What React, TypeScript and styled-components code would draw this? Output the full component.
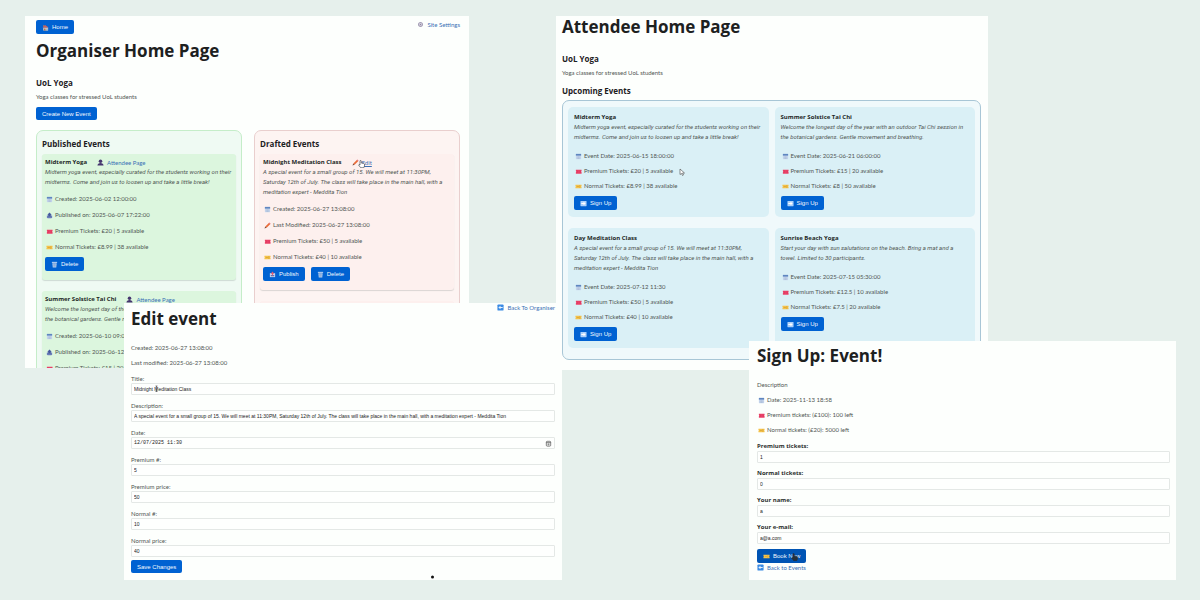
import React, { useId } from "react";
import styled, { createGlobalStyle } from "styled-components";

const heading = `"Open Sans", "Noto Sans", sans-serif`;
const body = `Lato, "Open Sans", sans-serif`;
const control = `"Liberation Sans", Arial, sans-serif`;

const GlobalStyle = createGlobalStyle`
  *, *::before, *::after { box-sizing: border-box; }
  body { margin: 0; background: #e6f0ec; }
  h1, h2, h3, p, ul { margin: 0; padding: 0; }
  ul { list-style: none; }
`;

const Board = styled.main`
  position: relative;
  min-height: 100vh;
  overflow: hidden;
  background: #e6f0ec;
  color: #505653;
  font: 6px/10px ${body};
`;

/* Each page is a window lying freely on the board. */
const Page = styled.section<{ $x: number; $y: number; $w: number }>`
  position: absolute;
  left: ${(p) => p.$x}px;
  top: ${(p) => p.$y}px;
  width: ${(p) => p.$w}%;
  background: #fdfffd;
`;
const OrganiserPage = styled(Page)`
  height: 352px;
  overflow: hidden;
  padding: 4px 9px 0 11px;
`;
const AttendeePage = styled(Page)`
  padding: 1px 7px 10px 6px;
`;
const EditPage = styled(Page)`
  padding: 0 7px 7px;
`;
const SignUpPage = styled(Page)`
  padding: 5px 6px 6px 8px;
`;

const TopBar = styled.div`
  display: flex;
  justify-content: space-between;
  align-items: flex-start;
`;
const Title = styled.h1<{ $top?: number }>`
  margin-top: ${(p) => p.$top ?? 0}px;
  font: 700 17px/20px ${heading};
  color: #1d211f;
  white-space: nowrap;
`;
const Subtitle = styled.h2<{ $top?: number }>`
  margin-top: ${(p) => p.$top ?? 0}px;
  font: 700 8px/12px ${heading};
  color: #1d211f;
`;
const Lead = styled.p`
  margin: 3px 0 5px;
`;

const Button = styled.button<{ $active?: boolean; $small?: boolean }>`
  display: inline-flex;
  align-items: center;
  gap: 3px;
  height: ${(p) => (p.$small ? 13 : 14)}px;
  padding: 0 6px;
  border: 0;
  border-radius: 2px;
  background: ${(p) => (p.$active ? "#0054b4" : "#0062d2")};
  color: #f4f9ff;
  font: 6px/10px ${control};
  white-space: nowrap;
  cursor: pointer;
`;
const Link = styled.a<{ $hover?: boolean }>`
  display: inline-flex;
  align-items: center;
  gap: 3px;
  color: #3a70b5;
  font: 6px/9px ${body};
  white-space: nowrap;
  text-decoration: ${(p) => (p.$hover ? "underline" : "none")};
`;

const tones = {
  green: { panel: "#effaf3", edge: "#c5edc9", card: "#dcf6de" },
  red: { panel: "#fdf4f2", edge: "#e9cfce", card: "#fdf0ee" },
  blue: { panel: "#f0f9fb", edge: "#a8c6d6", card: "#daf0f6" },
};
type Tone = keyof typeof tones;

const Columns = styled.div`
  display: grid;
  grid-template-columns: 1fr 1fr;
  align-items: start;
  gap: 12px;
  margin-top: 10px;
`;
const Panel = styled.section<{ $tone: Tone }>`
  padding: 7px 5px;
  min-height: 260px;
  border: 1px solid ${(p) => tones[p.$tone].edge};
  border-radius: 7px;
  background: ${(p) => tones[p.$tone].panel};
`;
const CardList = styled.div`
  display: grid;
  gap: 11px;
  margin-top: 4px;
`;
const CardGrid = styled.div`
  display: grid;
  grid-template-columns: 1fr 1fr;
  gap: 11px 6px;
  margin-top: 3px;
  padding: 6px 5px 11px;
  border: 1px solid ${tones.blue.edge};
  border-radius: 7px;
  background: ${tones.blue.panel};
`;
const Card = styled.article<{ $tone: Tone }>`
  padding: ${(p) => (p.$tone === "blue" ? "6px 6px 7px" : "4px 3px 9px")};
  border-radius: ${(p) => (p.$tone === "blue" ? 5 : 3)}px;
  background: ${(p) => tones[p.$tone].card};
  box-shadow: ${(p) => (p.$tone === "blue" ? "none" : "0 1px 1px rgba(60, 80, 70, 0.18)")};
`;
const CardHead = styled.div`
  display: flex;
  align-items: center;
  gap: 10px;
`;
const CardTitle = styled.h3`
  font: 700 6px/9px ${heading};
  color: #232826;
  white-space: nowrap;
`;
const Blurb = styled.p`
  font: italic 6px/10px Roboto, ${body};
  white-space: pre-line;
`;
const Facts = styled.ul<{ $gap: number }>`
  display: grid;
  gap: ${(p) => p.$gap}px;
`;
const Fact = styled.li`
  display: flex;
  align-items: center;
  gap: 2px;
  padding-left: 1px;
  line-height: 10px;
  white-space: nowrap;
`;
const CardFacts = styled.div<{ $top: number }>`
  margin: ${(p) => p.$top}px 0 5px;
`;
const Actions = styled.div`
  display: flex;
  gap: 6px;
`;

const Meta = styled.div`
  display: grid;
  gap: 5px;
  margin: 14px 0 6px;
`;
const Form = styled.form<{ $gap: number }>`
  display: grid;
  justify-items: start;
  gap: ${(p) => p.$gap}px;
`;
const FieldGroup = styled.div<{ $gap: number }>`
  display: grid;
  gap: ${(p) => p.$gap}px;
  width: 100%;
`;
const Label = styled.label<{ $strong?: boolean }>`
  display: block;
  font: ${(p) => (p.$strong ? `700 6px/10px ${heading}` : `6px/9px ${body}`)};
  color: ${(p) => (p.$strong ? "#2b302e" : "#505653")};
`;
const InputWrap = styled.div`
  display: flex;
  align-items: center;
  height: 12px;
  padding: 0 2px;
  border: 1px solid #e4e8e6;
  border-radius: 1px;
  background: #fefffe;
`;
const Input = styled.input<{ $mono?: boolean }>`
  flex: 1;
  min-width: 0;
  height: 10px;
  padding: 0;
  border: 0;
  outline: 0;
  background: transparent;
  color: #222;
  font: 5px/10px ${(p) => (p.$mono ? `"Liberation Mono", monospace` : control)};
`;
const Glyph = styled.svg`
  flex: none;
  width: 7px;
  height: 7px;
`;
const Cursor = styled.svg<{ $x: number; $y: number }>`
  position: absolute;
  left: ${(p) => p.$x}px;
  top: ${(p) => p.$y}px;
  width: 7px;
  height: 8px;
  pointer-events: none;
`;

const art = {
  calendar: (
    <>
      <rect x="2" y="2" width="12" height="12" rx="1" fill="#c9d9ef" />
      <path d="M2 2h12v4H2z" fill="#5f86c0" />
      <path d="M4 9h8M4 12h8" stroke="#8d9fc2" strokeWidth="1.4" strokeDasharray="2 1" />
    </>
  ),
  premium: (
    <>
      <path d="M2 4h13v3a1 1 0 0 0 0 2v4H2V9a1 1 0 0 0 0-2z" fill="#ea4168" />
      <path d="M5 6v5M12 6v5" stroke="#d22f58" strokeWidth="1" />
    </>
  ),
  normal: (
    <>
      <path d="M1 4h14v3a1 1 0 0 0 0 2v3H1V9a1 1 0 0 0 0-2z" fill="#f5c24a" />
      <path d="M4 8h5M11 5v6" stroke="#c7962f" strokeWidth="1.2" />
    </>
  ),
  outbox: (
    <>
      <path d="M2 8h3l1 2h4l1-2h3v5l-2 1H4l-2-1z" fill="#6a7cba" />
      <path d="M8 1l5 5h-2v5H5V6H3z" fill="#43579f" />
    </>
  ),
  publish: (
    <>
      <path d="M2 5h12v9H2z" fill="#c9d5ee" />
      <path d="M4 9h8v3H4z" fill="#5473b5" />
      <path d="M8 1l4 5h-3v4H7V6H4z" fill="#e2586a" />
    </>
  ),
  bin: (
    <>
      <path d="M2 2h12v2H2z" fill="#dfe9f7" />
      <path d="M3 5h10l-1 10H4z" fill="#b4cdee" />
      <path d="M6 6v7M8 6v7M10 6v7" stroke="#6f95c8" strokeWidth="1" />
    </>
  ),
  pencil: (
    <>
      <path d="M3 10L11 2l3 3-8 8z" fill="#ea6d3a" />
      <path d="M11 2l1-1 3 3-1 1z" fill="#d84a5c" />
      <path d="M3 10l3 3-5 2z" fill="#7a4a3a" />
    </>
  ),
  person: (
    <>
      <circle cx="8" cy="5" r="4" fill="#46366f" />
      <path d="M1 15c0-4 3-6 7-6s7 2 7 6z" fill="#46366f" />
    </>
  ),
  gear: (
    <>
      <circle cx="8" cy="8" r="4.5" fill="#dcd8e4" stroke="#a39cb4" strokeWidth="2.4" />
      <circle cx="8" cy="8" r="1.6" fill="#8d86a0" />
    </>
  ),
  home: (
    <>
      <path d="M3 8h11v7H3z" fill="#e6d6c8" />
      <path d="M1 8l6-6 8 6z" fill="#d0605a" />
      <path d="M3 2h2v4H3z" fill="#b57b5a" />
      <path d="M5 10h3v5H5z" fill="#96623f" />
      <path d="M10 10h3v3h-3z" fill="#5f96cf" />
    </>
  ),
  next: (
    <>
      <rect x="1" y="2" width="14" height="12" rx="1" fill="#a9d0fa" />
      <path d="M3 7h5V4l5 4-5 4V9H3z" fill="#fff" />
    </>
  ),
  back: (
    <>
      <rect x="1" y="1" width="14" height="14" rx="2" fill="#3b8be4" />
      <path d="M13 7H8V4L3 8l5 4V9h5z" fill="#e8f3ff" />
    </>
  ),
  picker: (
    <>
      <rect x="3" y="3" width="10" height="11" rx="2" fill="none" stroke="#444" strokeWidth="1.5" />
      <path d="M3 6h10M6 9h4M6 11h4" stroke="#444" strokeWidth="1.5" />
    </>
  ),
};
type IconName = keyof typeof art;

const Icon = ({ name }: { name: IconName }) => (
  <Glyph viewBox="0 0 16 16" aria-hidden="true">
    {art[name]}
  </Glyph>
);

type FactData = [IconName, string];
const FactList = ({ facts, gap }: { facts: FactData[]; gap: number }) => (
  <Facts $gap={gap}>
    {facts.map(([icon, text]) => (
      <Fact key={text}>
        <Icon name={icon} />
        {text}
      </Fact>
    ))}
  </Facts>
);

type EventProps = {
  tone: Tone;
  title: string;
  blurb: string;
  facts: FactData[];
  link?: React.ReactNode;
  actions: FactData[];
};
const EventCard = ({ tone, title, blurb, facts, link, actions }: EventProps) => (
  <Card $tone={tone}>
    <CardHead>
      <CardTitle>{title}</CardTitle>
      {link}
    </CardHead>
    <Blurb>{blurb}</Blurb>
    <CardFacts $top={tone === "blue" ? 9 : 7}>
      <FactList facts={facts} gap={tone === "blue" ? 5 : 6} />
    </CardFacts>
    <Actions>
      {actions.map(([icon, text]) => (
        <Button key={text} type="button">
          <Icon name={icon} />
          {text}
        </Button>
      ))}
    </Actions>
  </Card>
);

type FieldProps = { label: string; value: string; strong?: boolean; date?: boolean };
const Field = ({ label, value, strong, date }: FieldProps) => {
  const id = useId();
  return (
    <div>
      <Label htmlFor={id} $strong={strong}>
        {label}
      </Label>
      <InputWrap>
        <Input id={id} defaultValue={value} $mono={date} />
        {date && <Icon name="picker" />}
      </InputWrap>
    </div>
  );
};

const midterm =
  "Midterm yoga event, especially curated for the students working on their\nmidterms. Come and join us to loosen up and take a little break!";
const meditation =
  "A special event for a small group of 15. We will meet at 11:30PM,\nSaturday 12th of July. The class will take place in the main hall, with a\nmeditation expert - Meddita Tion";
const solstice =
  "Welcome the longest day of the year with an outdoor Tai Chi session in\nthe botanical gardens. Gentle movement and breathing.";
const beach =
  "Start your day with sun salutations on the beach. Bring a mat and a\ntowel. Limited to 30 participants.";

const attendeeLink = (
  <Link href="#attendee">
    <Icon name="person" />
    Attendee Page
  </Link>
);

const upcoming: { title: string; blurb: string; facts: FactData[] }[] = [
  {
    title: "Midterm Yoga",
    blurb: midterm,
    facts: [
      ["calendar", "Event Date: 2025-06-15 18:00:00"],
      ["premium", "Premium Tickets: £20 | 5 available"],
      ["normal", "Normal Tickets: £8.99 | 38 available"],
    ],
  },
  {
    title: "Summer Solstice Tai Chi",
    blurb: solstice,
    facts: [
      ["calendar", "Event Date: 2025-06-21 06:00:00"],
      ["premium", "Premium Tickets: £15 | 20 available"],
      ["normal", "Normal Tickets: £8 | 50 available"],
    ],
  },
  {
    title: "Day Meditation Class",
    blurb: meditation,
    facts: [
      ["calendar", "Event Date: 2025-07-12 11:30"],
      ["premium", "Premium Tickets: £50 | 5 available"],
      ["normal", "Normal Tickets: £40 | 10 available"],
    ],
  },
  {
    title: "Sunrise Beach Yoga",
    blurb: beach,
    facts: [
      ["calendar", "Event Date: 2025-07-15 05:30:00"],
      ["premium", "Premium Tickets: £12.5 | 10 available"],
      ["normal", "Normal Tickets: £7.5 | 20 available"],
    ],
  },
];

const Hand = ({ x, y, fill }: { x: number; y: number; fill: string }) => (
  <Cursor $x={x} $y={y} viewBox="0 0 14 16" aria-hidden="true">
    <path
      d="M5 1c1 0 1.5.5 1.5 1.5V6l5 1c1 .3 1.5 1 1.5 2v3l-1.5 3.5h-6L1 10l1-1 2 1V2.5C4 1.500 4 1 5 1z"
      fill={fill}
      stroke="#26303a"
      strokeWidth="1.2"
    />
  </Cursor>
);

export default function App() {
  return (
    <Board>
      <GlobalStyle />
      <OrganiserPage $x={25} $y={16} $w={37}>
        <TopBar>
          <Button type="button">
            <Icon name="home" />
            Home
          </Button>
          <Link href="#settings">
            <Icon name="gear" />
            Site Settings
          </Link>
        </TopBar>
        <Title $top={7}>Organiser Home Page</Title>
        <Subtitle $top={16}>UoL Yoga</Subtitle>
        <Lead>Yoga classes for stressed UoL students</Lead>
        <Actions>
          <Button type="button" $small>
            Create New Event
          </Button>
        </Actions>
        <Columns>
          <Panel $tone="green">
            <Subtitle>Published Events</Subtitle>
            <CardList>
              <EventCard
                tone="green"
                title="Midterm Yoga"
                blurb={midterm}
                link={attendeeLink}
                facts={[
                  ["calendar", "Created: 2025-06-02 12:00:00"],
                  ["outbox", "Published on: 2025-06-07 17:22:00"],
                  ["premium", "Premium Tickets: £20 | 5 available"],
                  ["normal", "Normal Tickets: £8.99 | 38 available"],
                ]}
                actions={[["bin", "Delete"]]}
              />
              <EventCard
                tone="green"
                title="Summer Solstice Tai Chi"
                blurb={solstice}
                link={attendeeLink}
                facts={[
                  ["calendar", "Created: 2025-06-10 09:00"],
                  ["outbox", "Published on: 2025-06-12"],
                  ["premium", "Premium Tickets: £15 | 20"],
                ]}
                actions={[]}
              />
            </CardList>
          </Panel>
          <Panel $tone="red">
            <Subtitle>Drafted Events</Subtitle>
            <CardList>
              <EventCard
                tone="red"
                title="Midnight Meditation Class"
                blurb={meditation}
                link={
                  <Link href="#edit" $hover>
                    <Icon name="pencil" />
                    Edit
                  </Link>
                }
                facts={[
                  ["calendar", "Created: 2025-06-27 13:08:00"],
                  ["pencil", "Last Modified: 2025-06-27 13:08:00"],
                  ["premium", "Premium Tickets: £50 | 5 available"],
                  ["normal", "Normal Tickets: £40 | 10 available"],
                ]}
                actions={[
                  ["publish", "Publish"],
                  ["bin", "Delete"],
                ]}
              />
              <Card $tone="red" />
            </CardList>
          </Panel>
        </Columns>
      </OrganiserPage>

      <AttendeePage $x={556} $y={16} $w={36}>
        <Title>Attendee Home Page</Title>
        <Subtitle $top={16}>UoL Yoga</Subtitle>
        <Lead>Yoga classes for stressed UoL students</Lead>
        <Subtitle $top={7}>Upcoming Events</Subtitle>
        <CardGrid>
          {upcoming.map((event) => (
            <EventCard key={event.title} tone="blue" {...event} actions={[["next", "Sign Up"]]} />
          ))}
        </CardGrid>
      </AttendeePage>

      <EditPage $x={124} $y={303} $w={36.5}>
        <TopBar>
          <Title $top={6}>Edit event</Title>
          <Link href="#organiser">
            <Icon name="back" />
            Back To Organiser
          </Link>
        </TopBar>
        <Meta>
          <p>Created: 2025-06-27 13:08:00</p>
          <p>Last modified: 2025-06-27 13:08:00</p>
        </Meta>
        <Form $gap={3}>
          <FieldGroup $gap={6}>
            <Field label="Title:" value="Midnight Meditation Class" />
            <Field
              label="Description:"
              value="A special event for a small group of 15. We will meet at 11:30PM, Saturday 12th of July. The class will take place in the main hall, with a meditation expert - Meddita Tion"
            />
            <Field label="Date:" value="12/07/2025 11:30" date />
            <Field label="Premium #:" value="5" />
            <Field label="Premium price:" value="50" />
            <Field label="Normal #:" value="10" />
            <Field label="Normal price:" value="40" />
          </FieldGroup>
          <Button type="button" $small>
            Save Changes
          </Button>
        </Form>
      </EditPage>

      <SignUpPage $x={749} $y={341} $w={35.6}>
        <Title>Sign Up: Event!</Title>
        <Meta>
          <p>Description</p>
          <FactList
            gap={5}
            facts={[
              ["calendar", "Date: 2025-11-13 18:58"],
              ["premium", "Premium tickets: (£100): 100 left"],
              ["normal", "Normal tickets: (£20): 5000 left"],
            ]}
          />
        </Meta>
        <Form $gap={5}>
          <FieldGroup $gap={5}>
            <Field label="Premium tickets:" value="1" strong />
            <Field label="Normal tickets:" value="0" strong />
            <Field label="Your name:" value="a" strong />
            <Field label="Your e-mail:" value="a@a.com" strong />
          </FieldGroup>
          <Button type="button" $active>
            <Icon name="normal" />
            Book Now
          </Button>
        </Form>
        <Link href="#events">
          <Icon name="back" />
          Back to Events
        </Link>
      </SignUpPage>

      <Hand x={358} y={160} fill="#fff" />
      <Hand x={791} y={553} fill="#26303a" />
      <Cursor $x={679} $y={168} viewBox="0 0 14 16" aria-hidden="true">
        <path d="M2 2v11l3-2 2 4 2-1-2-4h4z" fill="#fff" stroke="#444" strokeWidth="1.2" />
      </Cursor>
      <Cursor $x={153} $y={385} viewBox="0 0 14 16" aria-hidden="true">
        <path d="M5 2h4M7 2v11M5 13h4" fill="none" stroke="#333" strokeWidth="1.2" />
      </Cursor>
      <Cursor $x={429} $y={573} viewBox="0 0 14 16" aria-hidden="true">
        <circle cx="7" cy="8" r="3" fill="#111" />
      </Cursor>
    </Board>
  );
}
